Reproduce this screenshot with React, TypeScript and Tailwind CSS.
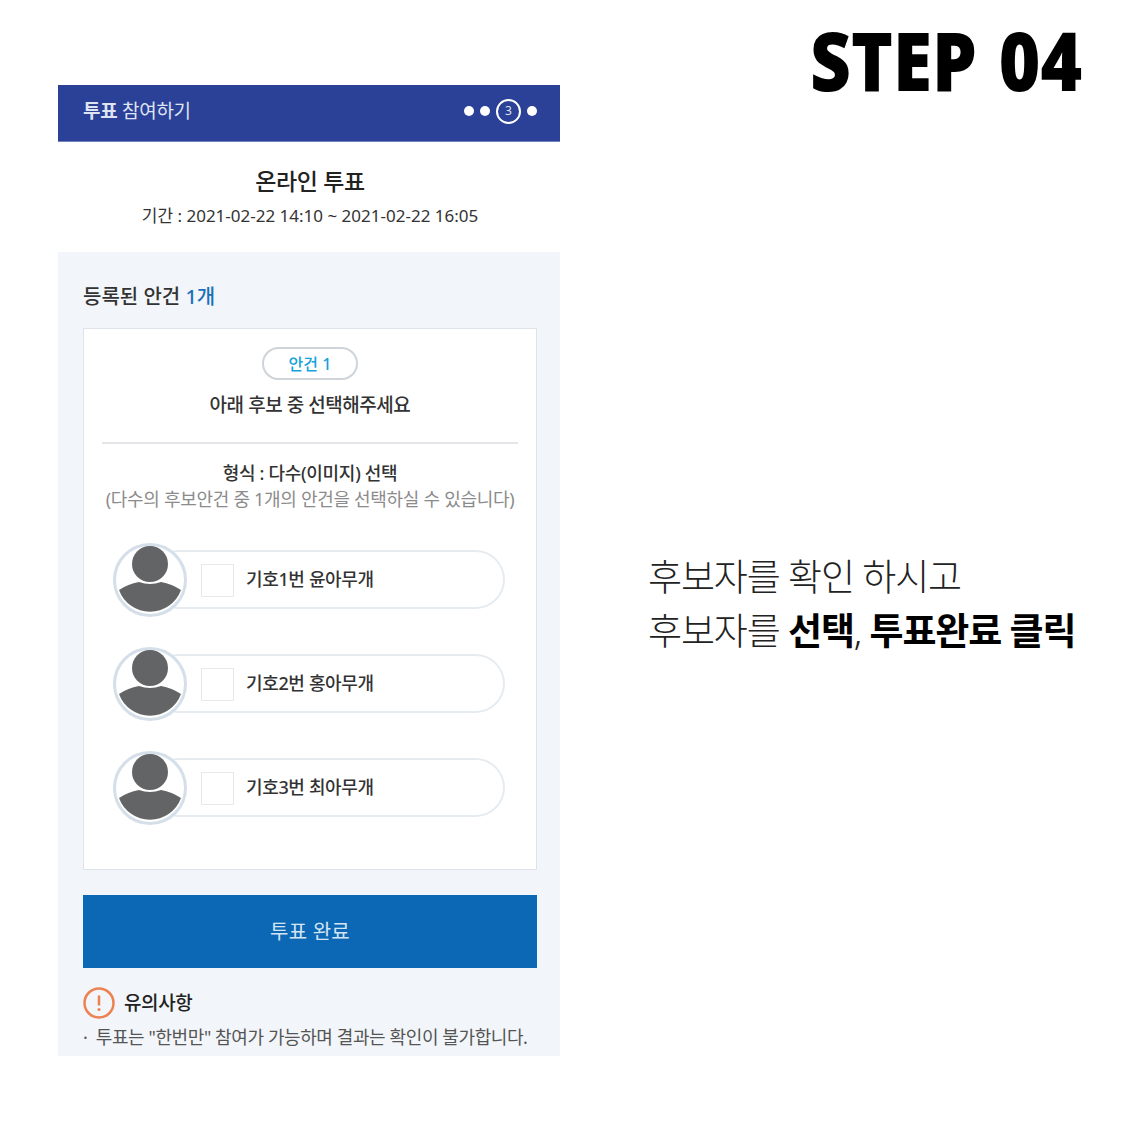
import React from 'react';

const candidates = ['기호1번 윤아무개', '기호2번 홍아무개', '기호3번 최아무개'];

const Avatar = () => (
  <svg viewBox="0 0 74 74" className="w-[74px] h-[74px] shrink-0">
    <circle cx="37" cy="37" r="35.5" fill="#fff" stroke="#d5dfe9" strokeWidth="3" />
    <circle cx="37" cy="21" r="18" fill="#636466" />
    <path d="M6 47 Q15 41 26 39 Q37 43 48 39 Q59 41 68 47 A33 33 0 0 1 6 47 Z" fill="#636466" />
  </svg>
);

const CandidateRow = ({ label }: { label: string }) => (
  <div className="relative h-[74px] flex items-center">
    <div className="absolute left-[36px] right-0 top-[7px] h-[59px] rounded-full border-2 border-[#e6ebf0] bg-white" />
    <div className="relative flex items-center">
      <Avatar />
      <div className="ml-[14px] w-[33px] h-[33px] border border-[#e8e8e8] bg-white" />
      <span className="ml-[12px] mb-[2px] text-[18px] font-medium tracking-[-0.35px] text-[#333]">{label}</span>
    </div>
  </div>
);

export default function App() {
  return (
    <div className="w-[1125px] h-[1125px] bg-white flex font-['Noto_Sans','Noto_Sans_CJK_KR',sans-serif] overflow-hidden">
      <div className="pl-[58px] pt-[85px]">
        <div className="w-[502px] h-[971px] flex flex-col overflow-hidden">
          <div className="h-[57px] bg-[#2b4097] border-b border-[#6f82bd] pl-[25px] pr-[23px] pb-[4px] flex items-center justify-between text-white">
            <span className="text-[19px] tracking-[-0.3px] text-[#dfe4f2]">
              <b className="font-bold">투표</b> 참여하기
            </span>
            <div className="flex items-center gap-[6px]">
              <span className="w-[10px] h-[10px] rounded-full bg-white" />
              <span className="w-[10px] h-[10px] rounded-full bg-white" />
              <span className="w-[25px] h-[25px] rounded-full border-2 border-white flex items-center justify-center text-[12px] leading-none text-[#dfe4f2]">3</span>
              <span className="w-[10px] h-[10px] rounded-full bg-white" />
            </div>
          </div>

          <div className="h-[110px] pl-[2px] flex flex-col items-center text-[#333]">
            <h1 className="mt-[22px] text-[23px] leading-[34px] font-medium tracking-[-0.4px] text-[#222]">온라인 투표</h1>
            <p className="mt-[5px] text-[17px] leading-[26px] tracking-[0px]">기간 : 2021-02-22 14:10 ~ 2021-02-22 16:05</p>
          </div>

          <div className="flex-1 bg-[#f2f5f9] px-[25px] flex flex-col">
            <h2 className="mt-[30px] text-[20px] leading-[30px] font-medium tracking-[0px] text-[#333]">
              등록된 안건 <span className="text-[#1a70b8]">1개</span>
            </h2>

            <div className="mt-[16px] w-[454px] h-[542px] bg-white border border-[#dfe4ea] flex flex-col items-center">
              <div className="mt-[18px] w-[96px] h-[33px] rounded-full border-2 border-[#cfd4da] flex items-center justify-center text-[16px] font-medium text-[#16a2dc]">안건 1</div>
              <p className="mt-[10px] text-[19px] leading-[30px] font-medium tracking-[-0.45px] text-[#333]">아래 후보 중 선택해주세요</p>
              <div className="mt-[22px] w-[416px] h-[2px] bg-[#e3e5e8]" />
              <p className="mt-[15px] text-[18px] leading-[28px] font-medium tracking-[-0.3px] text-[#333]">형식 : 다수(이미지) 선택</p>
              <p className="-mt-[1px] text-[18px] leading-[26px] tracking-[-0.3px] text-[#8b8b8b] whitespace-nowrap">(다수의 후보안건 중 1개의 안건을 선택하실 수 있습니다)</p>
              <div className="mt-[31px] mr-[2px] w-[392px] flex flex-col gap-[30px]">
                {candidates.map((c) => (
                  <CandidateRow key={c} label={c} />
                ))}
              </div>
            </div>

            <button className="mt-[25px] w-[454px] h-[73px] bg-[#0c68b5] text-[20px] tracking-[0.2px] text-[#d5e4f2]">투표 완료</button>

            <div className="mt-[19px] flex items-center">
              <svg viewBox="0 0 32 32" className="w-[32px] h-[32px]">
                <circle cx="16" cy="16" r="14.5" fill="none" stroke="#ee8152" strokeWidth="2.5" />
                <path d="M16 8.5v10" stroke="#ee8152" strokeWidth="2.5" />
                <circle cx="16" cy="22.5" r="1.5" fill="#ee8152" />
              </svg>
              <span className="ml-[9px] text-[19px] font-medium tracking-[-0.4px] text-[#222]">유의사항</span>
            </div>
            <p className="mt-[5px] text-[18px] leading-[26px] whitespace-nowrap tracking-[-0.4px] text-[#555]">
              <span className="mr-[4px]">·</span> 투표는 "한번만" 참여가 가능하며 결과는 확인이 불가합니다.
            </p>
          </div>
        </div>
      </div>

      <div className="flex-1 flex flex-col items-end">
        <div className="mt-[2px] mr-[43px] origin-right scale-x-[0.866] text-[82px] leading-[114px] font-black [word-spacing:4px] text-black whitespace-nowrap">STEP 04</div>
        <div className="mt-[434px] w-full pl-[88px] text-[37px] leading-[54px] tracking-[-1.15px] font-light text-[#222] whitespace-nowrap">
          <p>후보자를 확인 하시고</p>
          <p>후보자를 <b className="font-bold text-black">선택</b>, <b className="font-bold text-black">투표완료 클릭</b></p>
        </div>
      </div>
    </div>
  );
}
